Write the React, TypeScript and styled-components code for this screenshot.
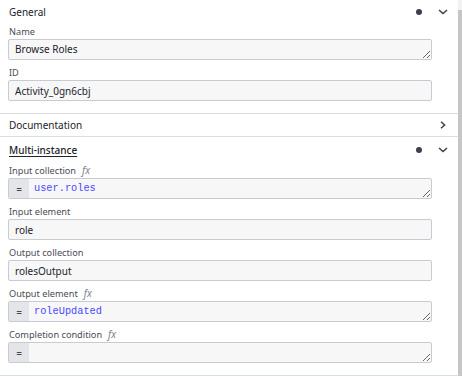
import styled, { createGlobalStyle } from 'styled-components'

const GlobalStyle = createGlobalStyle`
    html, body {
        margin: 0;
        padding: 0;
        background: #ffffff;
    }
    body {
        font-family: "Noto Sans", "Liberation Sans", sans-serif;
        color: #22242a;
    }
`

const Layout = styled.div`
    display: flex;
    width: 462px;
    height: 376px;
    overflow: hidden;
`

const Panel = styled.div`
    width: 458px;
    display: flex;
    flex-direction: column;
`

const Scrollbar = styled.div`
    width: 4px;
    display: flex;
    flex-direction: column;
    background: #f1f1f1;
    padding-top: 10px;
`

const ScrollThumb = styled.div`
    flex: 1;
    background: #c6c6c6;
`

const Group = styled.section<{ $open?: boolean }>`
    border-bottom: 1px solid #dcdde1;
    padding-bottom: ${({ $open }) => ($open ? '8px' : '0')};
`

const GroupHeader = styled.div<{ $height: number }>`
    display: flex;
    align-items: center;
    height: ${({ $height }) => $height}px;
    padding: 0 10px 0 9px;
`

const GroupTitle = styled.span<{ $underline?: boolean }>`
    flex: 1;
    font-size: 10px;
    font-weight: ${({ $underline }) => ($underline ? 500 : 400)};
    color: #22242a;
    text-decoration: ${({ $underline }) => ($underline ? 'underline' : 'none')};
    text-underline-offset: 2px;
`

const HeaderIcons = styled.div`
    display: flex;
    align-items: center;
    gap: 16px;
`

const Dot = styled.span`
    width: 6px;
    height: 6px;
    border-radius: 50%;
    background: #3d3f4d;
`

const Entry = styled.div`
    padding: 0 26px 0 8px;
    margin-bottom: 4px;
`

const Label = styled.label`
    display: flex;
    align-items: center;
    gap: 6px;
    height: 16px;
    padding-left: 1px;
    font-size: 9.2px;
    color: #4a4c55;
`

const Fx = styled.span`
    font-family: "Noto Sans", "Liberation Sans", sans-serif;
    font-style: italic;
    font-size: 10px;
    color: #80838e;
`

const fieldBase = `
    box-sizing: border-box;
    width: 100%;
    height: 21px;
    margin: 0;
    border: 1px solid #c9cbd2;
    border-radius: 2px;
    background: #f7f7f8;
    font-family: "Noto Sans", "Liberation Sans", sans-serif;
    font-size: 10px;
    color: #22242a;
    padding: 0 6px;
    outline: none;
    display: block;
`

const TextInput = styled.input`
    ${fieldBase}
`

const TextArea = styled.textarea`
    ${fieldBase}
    resize: vertical;
    line-height: 19px;
    overflow: hidden;
`

const FeelBox = styled.div`
    box-sizing: border-box;
    display: flex;
    width: 100%;
    height: 21px;
    border: 1px solid #c9cbd2;
    border-radius: 2px;
    background: #f7f7f8;
    overflow: hidden;
`

const FeelPrefix = styled.span`
    width: 20px;
    display: flex;
    align-items: center;
    justify-content: center;
    background: #e4e5e9;
    font-size: 10px;
    color: #45474f;
`

const FeelCode = styled.textarea`
    flex: 1;
    height: 19px;
    margin: 0;
    border: none;
    background: transparent;
    resize: vertical;
    overflow: hidden;
    outline: none;
    padding: 0 5px;
    line-height: 19px;
    font-family: "Liberation Mono", "DejaVu Sans Mono", monospace;
    font-size: 10.3px;
    color: #4a4aff;
`

function ChevronDown() {
    return (
        <svg width="10" height="6" viewBox="0 0 10 6" fill="none">
            <path d="M1 1l4 3.6L9 1" stroke="#3d3f4d" strokeWidth="1.5" />
        </svg>
    )
}

function ChevronRight() {
    return (
        <svg width="10" height="8" viewBox="0 0 10 8" fill="none">
            <path d="M3 0.8l3.6 3.2L3 7.2" stroke="#3d3f4d" strokeWidth="1.5" />
        </svg>
    )
}

interface IField {
    label: string
    value: string
    kind: 'input' | 'textarea' | 'feel'
}

const generalFields: IField[] = [
    { label: 'Name', value: 'Browse Roles', kind: 'textarea' },
    { label: 'ID', value: 'Activity_0gn6cbj', kind: 'input' },
]

const multiFields: IField[] = [
    { label: 'Input collection', value: 'user.roles', kind: 'feel' },
    { label: 'Input element', value: 'role', kind: 'input' },
    { label: 'Output collection', value: 'rolesOutput', kind: 'input' },
    { label: 'Output element', value: 'roleUpdated', kind: 'feel' },
    { label: 'Completion condition', value: '', kind: 'feel' },
]

function Field({ field }: { field: IField }) {
    return (
        <Entry>
            <Label>
                {field.label}
                {field.kind === 'feel' && <Fx>fx</Fx>}
            </Label>
            {field.kind === 'input' && <TextInput readOnly value={field.value} />}
            {field.kind === 'textarea' && <TextArea readOnly rows={1} value={field.value} />}
            {field.kind === 'feel' && (
                <FeelBox>
                    <FeelPrefix>=</FeelPrefix>
                    <FeelCode readOnly rows={1} spellCheck={false} value={field.value} />
                </FeelBox>
            )}
        </Entry>
    )
}

export default function App() {
    return (
        <>
            <GlobalStyle />
            <Layout>
                <Panel>
                    <Group $open>
                        <GroupHeader $height={23}>
                            <GroupTitle>General</GroupTitle>
                            <HeaderIcons>
                                <Dot />
                                <ChevronDown />
                            </HeaderIcons>
                        </GroupHeader>
                        {generalFields.map((f, i) => <Field key={i} field={f} />)}
                    </Group>
                    <Group>
                        <GroupHeader $height={22}>
                            <GroupTitle>Documentation</GroupTitle>
                            <ChevronRight />
                        </GroupHeader>
                    </Group>
                    <Group $open>
                        <GroupHeader $height={25}>
                            <GroupTitle $underline>Multi-instance</GroupTitle>
                            <HeaderIcons>
                                <Dot />
                                <ChevronDown />
                            </HeaderIcons>
                        </GroupHeader>
                        {multiFields.map((f, i) => <Field key={i} field={f} />)}
                    </Group>
                </Panel>
                <Scrollbar>
                    <ScrollThumb />
                </Scrollbar>
            </Layout>
        </>
    )
}
